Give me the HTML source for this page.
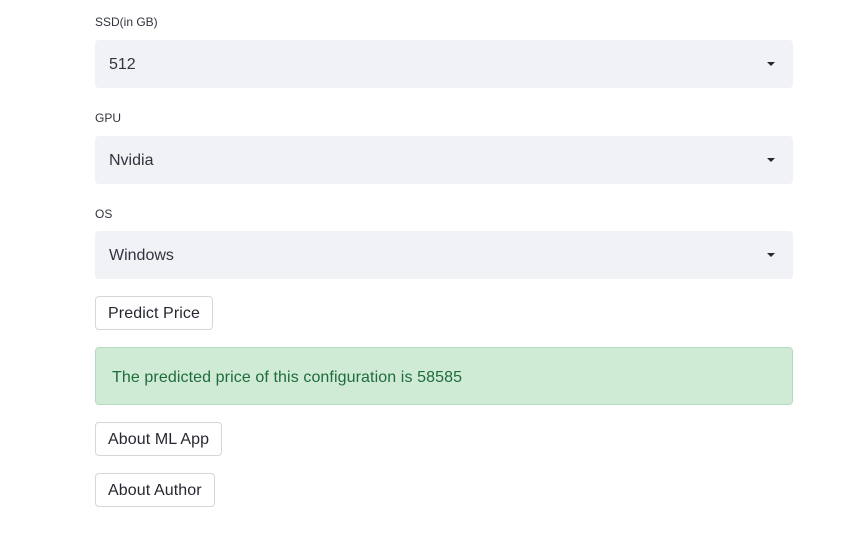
<!DOCTYPE html>
<html><head><style>
body{margin:0;background:#fff;font-family:"Liberation Sans",sans-serif;color:#262730;width:852px;height:540px;overflow:hidden;position:relative}
.lab{position:absolute;left:95px;font-size:12px;color:#31333f;top:0}
.sel{position:absolute;left:95px;width:698px;height:48px;background:#f0f2f6;border-radius:4px;font-size:16px;line-height:50px;text-indent:14px;color:#31333f}
.sel:after{content:"";position:absolute;right:18px;top:22px;border-left:4px solid transparent;border-right:4px solid transparent;border-top:4px solid #262730}
.btn{position:absolute;left:95px;height:32px;border:1px solid #d6d6d9;border-radius:4px;font-size:16px;line-height:34px;padding:0 12px;color:#262730;background:#fff;letter-spacing:0.1px}
.alert{position:absolute;left:95px;top:347px;width:696px;height:56px;background:#cfebd6;border:1px solid #b5dcc0;border-radius:4px;font-size:16px;line-height:59px;text-indent:16px;color:#1f6b3a;letter-spacing:0.1px}
</style></head><body>
<div class="lab" style="top:15px">SSD(in GB)</div>
<div class="sel" style="top:40px">512</div>
<div class="lab" style="top:111px">GPU</div>
<div class="sel" style="top:136px">Nvidia</div>
<div class="lab" style="top:207px">OS</div>
<div class="sel" style="top:231px">Windows</div>
<div class="btn" style="top:296px">Predict Price</div>
<div class="alert">The predicted price of this configuration is 58585</div>
<div class="btn" style="top:422px">About ML App</div>
<div class="btn" style="top:473px">About Author</div>
</body></html>
